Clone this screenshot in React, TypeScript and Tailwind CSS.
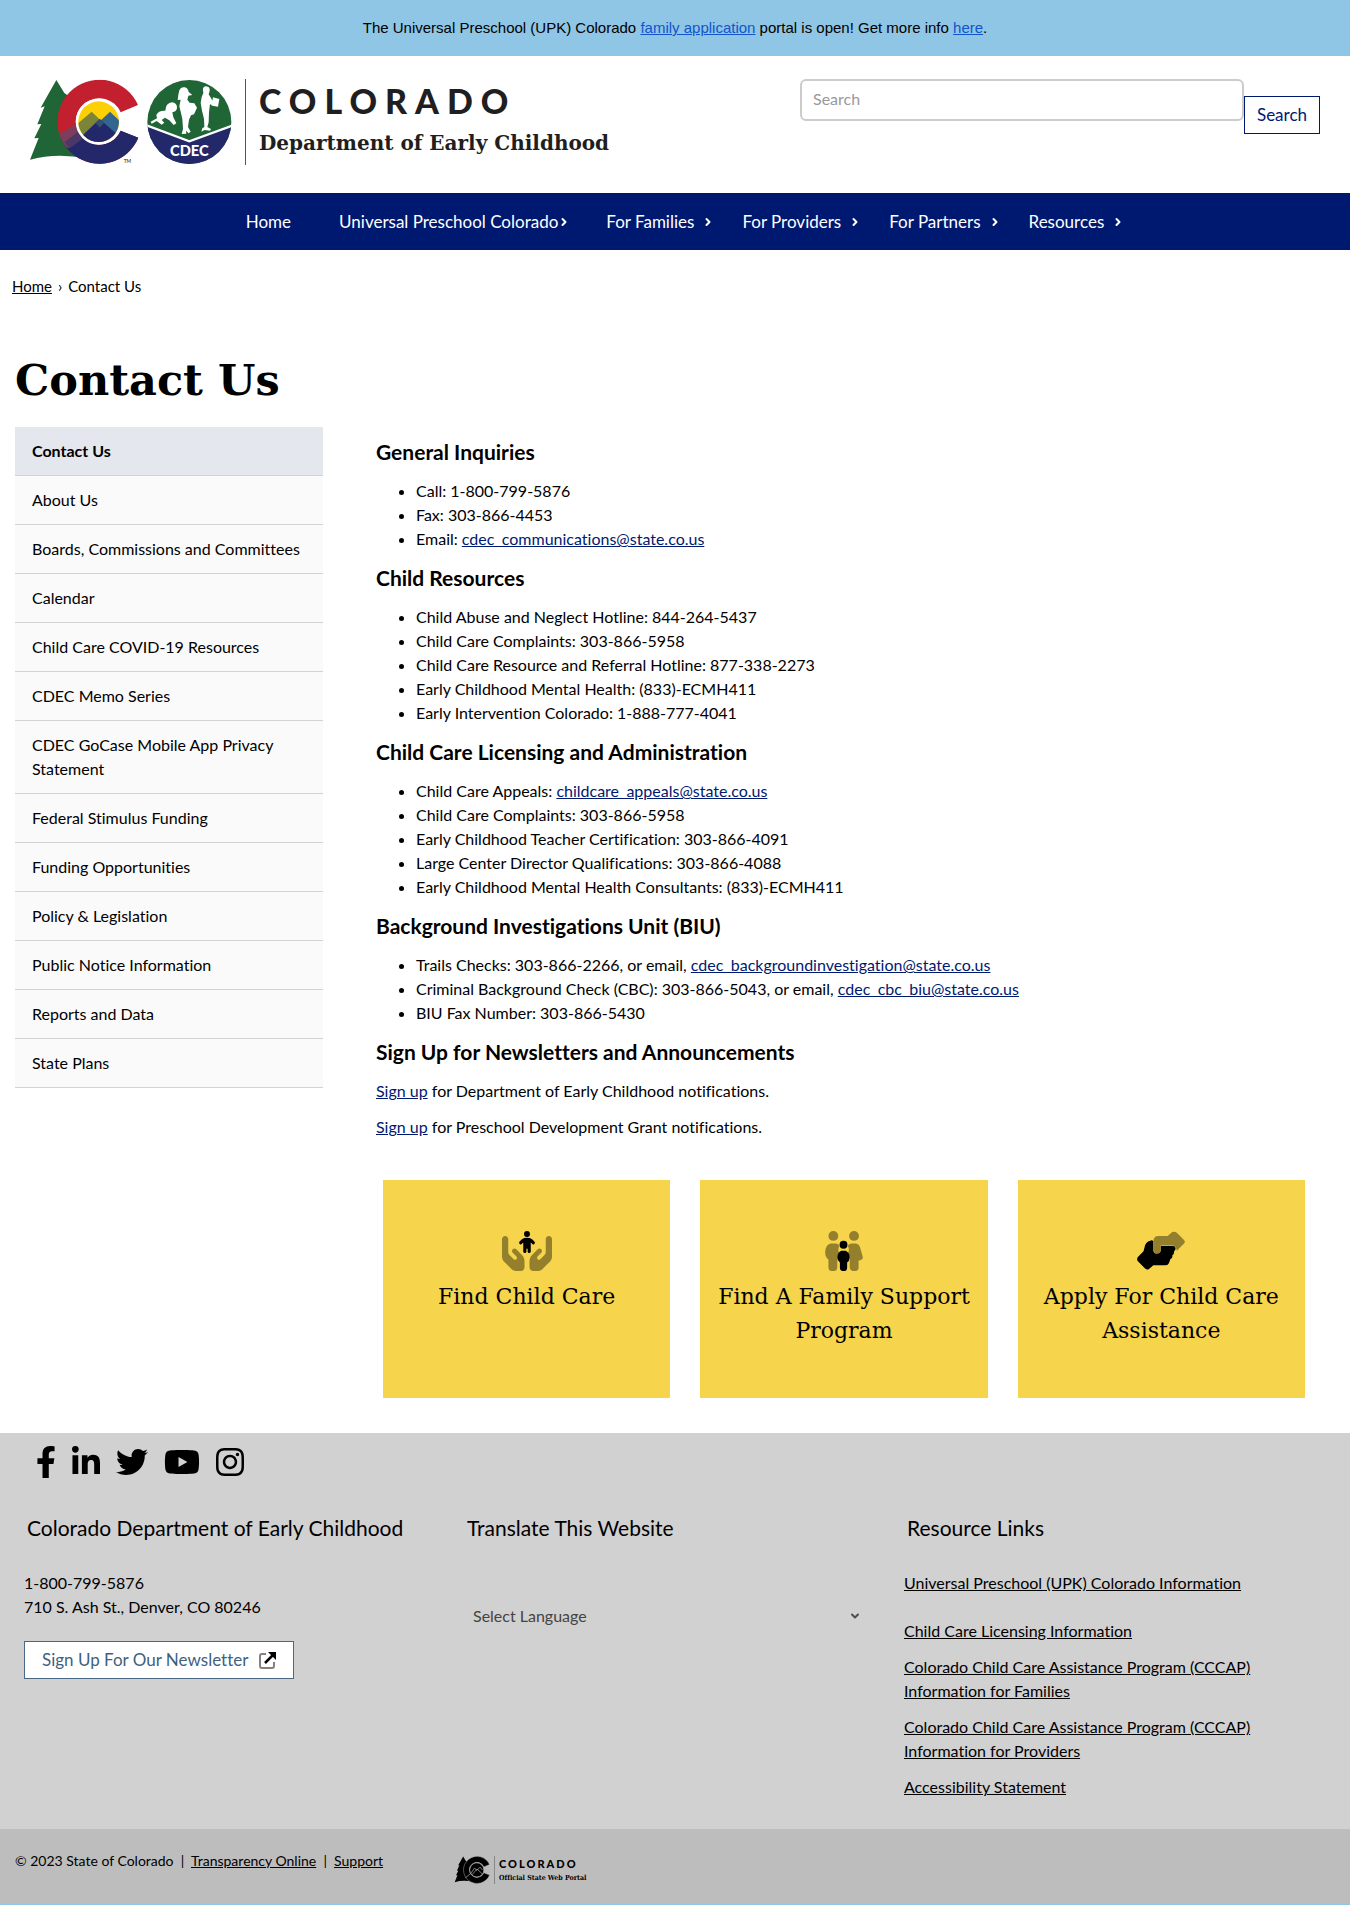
import React from "react";
import { ChevronDown, ChevronRight } from "lucide-react";
import { FaFacebookF, FaInstagram, FaLinkedinIn, FaTwitter, FaYoutube } from "react-icons/fa";
import { FaHandsHolding } from "react-icons/fa6";

const sans = "font-[Lato,sans-serif]";
const slab = "font-['DejaVu_Serif',serif]";
const slabNarrow = "font-['DejaVu_Serif_Condensed','DejaVu_Serif',serif]";

const TREE =
  "M110 33 L134 72 L160 90 L150 240 L200 268 Q110 250 31 272 L57 207 L44 208 L65 165 L53 166 L75 112 L63 116 Z";
const C_SHAPE =
  "M355 108 A126 126 0 1 0 356 206 L303 185 A70 70 0 1 1 303 130 Z";

function Logo() {
  return (
    <svg viewBox="25 30 615 258" className="h-[86px] w-[205px] shrink-0" role="img" aria-label="CDEC logo">
      <defs>
        <clipPath id="c-letter">
          <path d={C_SHAPE} />
        </clipPath>
        <clipPath id="sun">
          <circle cx="237" cy="158" r="61" />
        </clipPath>
        <clipPath id="badge">
          <circle cx="509" cy="159" r="126" />
        </clipPath>
      </defs>
      <path d={TREE} fill="#1f6536" />
      <g clipPath="url(#c-letter)">
        <rect x="100" y="30" width="270" height="260" fill="#c3202f" />
        <path d="M192 160 L112 212 L112 290 L370 290 L370 160 Z" fill="#23286b" />
        <path d="M180 158 L106 204 L144 238 L196 194 Z" fill="#7b3f5c" />
        <path d="M186 180 L134 220 L150 238 L200 202 Z" fill="#4b3868" />
      </g>
      <circle cx="237" cy="158" r="69" fill="#fff" />
      <g clipPath="url(#sun)">
        <rect x="170" y="90" width="140" height="140" fill="#fdd006" />
        <path d="M216 128 L150 184 L190 230 L280 190 Z" fill="#7b8437" />
        <path d="M271 128 L235 162 L290 230 L330 184 Z" fill="#33658e" />
        <path d="M240 150 L165 222 L180 240 L300 240 L312 214 Z" fill="#23286b" />
        <path d="M240 150 L228 162 L240 176 L253 162 Z" fill="#35506d" />
      </g>
      <text x="312" y="282" fontSize="15" fontFamily="Lato" fill="#222">TM</text>
      <g clipPath="url(#badge)">
        <rect x="380" y="30" width="260" height="260" fill="#1f6536" />
        <path d="M380 170 L509 218 L640 170 V290 H380 Z" fill="#23286b" />
        <path d="M380 169 L509 217 L640 169" fill="none" stroke="#fff" strokeWidth="7" />
      </g>
      <g fill="#fff">
        <path d="M393 158 L412 148 L410 138 Q416 124 437 125 Q438 103 456 100 Q473 102 472 117 Q470 128 458 130 L461 145 L470 163 L462 168 L449 154 L436 146 L426 153 L434 161 L426 167 L411 156 L396 164 Z" />
        <path d="M476 77 L479 64 Q484 53 495 55 Q505 57 507 69 L518 78 L506 80 L503 92 L510 101 L524 103 L532 116 L523 136 L514 139 L508 152 L505 174 L513 188 L507 193 L499 185 L500 194 L486 195 L490 180 L488 150 L484 132 L479 112 L483 92 L474 93 Z" />
        <path d="M551 72 Q546 52 559 52 Q572 53 570 66 L567 76 L574 87 L578 95 L580 85 L599 90 L595 113 L578 110 L571 105 L568 130 L567 160 L563 174 L574 180 L571 185 L555 183 L545 188 L548 178 L554 174 L553 150 L547 125 L543 101 L546 84 Z" />
      </g>
      <text x="509" y="260" textAnchor="middle" fontSize="44" fontWeight="900" fontFamily="Lato" fill="#fff">
        CDEC
      </text>
    </svg>
  );
}

function MonoLogo() {
  return (
    <svg viewBox="25 30 335 258" className="h-7 w-9 shrink-0" aria-hidden="true">
      <path d={TREE} />
      <path d={C_SHAPE} stroke="#bdbdbd" strokeWidth="4" />
      <circle cx="237" cy="158" r="66" stroke="#bdbdbd" strokeWidth="6" />
      <path d="M182 190 L216 140 L236 164 L268 132 L290 160 M190 206 L240 150 L290 196 M130 232 L182 190" fill="none" stroke="#bdbdbd" strokeWidth="6" />
    </svg>
  );
}

function HandsChildIcon() {
  return (
    <span className="grid h-10 w-[50px]">
      <FaHandsHolding className="col-start-1 row-start-1 h-10 w-[50px] text-[#94802c]" />
      <svg viewBox="0 0 640 512" className="col-start-1 row-start-1 h-10 w-[50px]" aria-hidden="true">
        <circle cx="320" cy="38" r="38" />
        <path d="M284 90 Q320 82 356 90 Q390 104 420 142 Q426 164 406 172 Q392 174 382 160 L368 148 V264 Q366 282 346 282 Q330 280 328 264 V226 H312 V264 Q310 282 294 282 Q274 280 272 264 V148 L258 160 Q248 174 234 172 Q214 164 220 142 Q250 104 284 90 Z" />
      </svg>
    </span>
  );
}

function FamilyIcon() {
  return (
    <svg viewBox="0 0 115 122" className="h-10 w-[38px]" aria-hidden="true">
      <g fill="#94802c">
        <circle cx="25" cy="15" r="15" />
        <path d="M17 38 H33 Q42 39 43 46 Q37 60 44 68 Q36 76 37 88 V112 Q36 122 26 122 H18 Q10 120 10 112 V87 Q0 80 0 65 Q1 42 17 38 Z" />
        <circle cx="88" cy="15" r="15" />
        <path d="M80 38 H94 Q103 39 106 48 L115 80 Q115 89 102 90 V112 Q101 122 92 122 H84 Q76 120 75 112 V88 Q77 76 69 68 Q76 57 69 46 Q71 39 80 38 Z" />
      </g>
      <circle cx="56" cy="42" r="12" />
      <path d="M49 60 H63 Q75 66 75 81 Q74 92 67 96 V113 Q66 122 60 122 H52 Q45 121 45 113 V96 Q37 91 37 81 Q38 65 49 60 Z" />
    </svg>
  );
}

function HelpingHandsIcon() {
  return (
    <svg viewBox="0 0 147 122" className="h-10 w-12" aria-hidden="true">
      <path d="M2 80 L20 62 L25 43 Q28 36 34 32 L45 28 L50 30 V60 Q52 69 61 69 Q72 68 73 58 V46 H112 Q119 47 118 56 L114 62 Q114 72 108 75 Q110 83 102 86 L98 98 Q95 105 88 105 H50 L36 117 Q30 120 24 114 L2 92 Q-1 86 2 80 Z" />
      <path d="M50 30 Q52 15 65 15 H94 L108 3 Q116 0 122 5 L144 27 Q149 33 144 38 L122 60 Q119 46 110 44 H73 V58 Q72 69 61 69 Q51 68 50 58 Z" fill="#94802c" />
    </svg>
  );
}

const nav = [
  { label: "Home", cls: "mr-5", arrow: false, gap: "gap-2" },
  { label: "Universal Preschool Colorado", cls: "mr-2", arrow: true, gap: "gap-0" },
  { label: "For Families", cls: "", arrow: true, gap: "gap-2" },
  { label: "For Providers", cls: "", arrow: true, gap: "gap-2" },
  { label: "For Partners", cls: "", arrow: true, gap: "gap-2" },
  { label: "Resources", cls: "", arrow: true, gap: "gap-2" },
];

const side = [
  "Contact Us",
  "About Us",
  "Boards, Commissions and Committees",
  "Calendar",
  "Child Care COVID-19 Resources",
  "CDEC Memo Series",
  "CDEC GoCase Mobile App Privacy Statement",
  "Federal Stimulus Funding",
  "Funding Opportunities",
  "Policy & Legislation",
  "Public Notice Information",
  "Reports and Data",
  "State Plans",
];

type Line = { text: string; mail?: string };
const sections: { title: string; lines: Line[] }[] = [
  {
    title: "General Inquiries",
    lines: [
      { text: "Call: 1-800-799-5876" },
      { text: "Fax: 303-866-4453" },
      { text: "Email: ", mail: "cdec_communications@state.co.us" },
    ],
  },
  {
    title: "Child Resources",
    lines: [
      { text: "Child Abuse and Neglect Hotline: 844-264-5437" },
      { text: "Child Care Complaints: 303-866-5958" },
      { text: "Child Care Resource and Referral Hotline: 877-338-2273" },
      { text: "Early Childhood Mental Health: (833)-ECMH411" },
      { text: "Early Intervention Colorado: 1-888-777-4041" },
    ],
  },
  {
    title: "Child Care Licensing and Administration",
    lines: [
      { text: "Child Care Appeals: ", mail: "childcare_appeals@state.co.us" },
      { text: "Child Care Complaints: 303-866-5958" },
      { text: "Early Childhood Teacher Certification: 303-866-4091" },
      { text: "Large Center Director Qualifications: 303-866-4088" },
      { text: "Early Childhood Mental Health Consultants: (833)-ECMH411" },
    ],
  },
  {
    title: "Background Investigations Unit (BIU)",
    lines: [
      { text: "Trails Checks: 303-866-2266, or email, ", mail: "cdec_backgroundinvestigation@state.co.us" },
      { text: "Criminal Background Check (CBC): 303-866-5043, or email, ", mail: "cdec_cbc_biu@state.co.us" },
      { text: "BIU Fax Number: 303-866-5430" },
    ],
  },
];

const link = "text-[#001970] underline";

const socials = [
  { name: "Facebook", icon: <FaFacebookF className="h-8 w-5" /> },
  { name: "LinkedIn", icon: <FaLinkedinIn className="h-8 w-7" /> },
  { name: "Twitter", icon: <FaTwitter className="h-8 w-8" /> },
  { name: "YouTube", icon: <FaYoutube className="h-8 w-9" /> },
  { name: "Instagram", icon: <FaInstagram className="h-8 w-7" /> },
];

const cards = [
  { title: "Find Child Care", icon: <HandsChildIcon /> },
  { title: "Find A Family Support Program", icon: <FamilyIcon /> },
  { title: "Apply For Child Care Assistance", icon: <HelpingHandsIcon /> },
];

const resources = [
  { t: "Universal Preschool (UPK) Colorado Information", cls: "mb-6" },
  { t: "Child Care Licensing Information", cls: "mb-3" },
  { t: "Colorado Child Care Assistance Program (CCCAP) Information for Families", cls: "mb-3" },
  { t: "Colorado Child Care Assistance Program (CCCAP) Information for Providers", cls: "mb-3" },
  { t: "Accessibility Statement", cls: "" },
];

export default function App() {
  return (
    <div className={`bg-white text-base leading-6 text-black [font-variant-ligatures:none] ${sans}`}>
      <div className="bg-[#8fc5e5] px-4 py-4 text-center font-['Liberation_Sans',Arial,sans-serif] text-[15px] leading-6">
        The Universal Preschool (UPK) Colorado{" "}
        <a href="#apply" className="text-[#1155cc] underline">family application</a> portal is open! Get more info{" "}
        <a href="#info" className="text-[#1155cc] underline">here</a>.
      </div>

      <header className="flex items-start justify-between pt-[23px] pr-[30px] pb-7 pl-7">
        <a href="#home" className="flex items-center text-[#1f1f21]">
          <Logo />
          <span className="ml-3 flex h-[86px] flex-col border-l border-[#555] pl-[13px]">
            <span className="mt-1 text-[34px] leading-9 font-black tracking-[8px]">COLORADO</span>
            <span className={`mt-1 text-xl leading-10 font-bold ${slab}`}>Department of Early Childhood</span>
          </span>
        </a>
        <form className="flex items-start" onSubmit={(e) => e.preventDefault()}>
          <input
            type="search"
            aria-label="Search"
            placeholder="Search"
            className="h-[42px] w-[444px] rounded-md border-2 border-[#ccc] px-[11px] pb-1 placeholder:text-[#999]"
          />
          <button type="submit" className="mt-[17px] h-[38px] w-[76px] border border-[#001970] bg-white text-[17px] text-[#001970]">
            Search
          </button>
        </form>
      </header>

      <nav className="flex justify-center gap-7 bg-[#001970] pt-[17px] pb-4 pl-5 text-[17px] leading-6 text-white">
        {nav.map((n) => (
          <a key={n.label} href="#nav" className={`flex items-center ${n.gap} ${n.cls}`}>
            {n.label}
            {n.arrow && <ChevronRight className="h-3 w-3" strokeWidth={4} />}
          </a>
        ))}
      </nav>

      <nav aria-label="Breadcrumb" className="flex gap-[6px] px-3 pt-6 text-[15px]">
        <a href="#home" className="underline">Home</a>
        <span>›</span>
        <span>Contact Us</span>
      </nav>

      <main className="px-[15px]">
        <h1 className={`pt-[52px] pb-[17px] text-[43px] leading-[60px] font-bold ${slab}`}>Contact Us</h1>
        <div className="flex items-start gap-[53px]">
          <ul className="w-[308px] shrink-0">
            {side.map((s, i) => (
              <li key={s} className="border-b border-[#d2d2d6]">
                <a href="#page" className={`block px-[17px] py-3 ${i === 0 ? "bg-[#e4e7ee] font-bold" : "bg-[#fafafa]"}`}>
                  {s}
                </a>
              </li>
            ))}
          </ul>
          <div className="grow pt-[13px]">
            {sections.map((s) => (
              <section key={s.title} className="mb-[15px]">
                <h2 className="mb-[15px] text-[21px] leading-6 font-bold">{s.title}</h2>
                <ul className="list-disc pl-10">
                  {s.lines.map((l) => (
                    <li key={l.text}>
                      {l.text}
                      {l.mail && <a href="#mail" className={link}>{l.mail}</a>}
                    </li>
                  ))}
                </ul>
              </section>
            ))}
            <h2 className="mb-[15px] text-[21px] leading-6 font-bold">Sign Up for Newsletters and Announcements</h2>
            <p className="mb-3"><a href="#signup" className={link}>Sign up</a> for Department of Early Childhood notifications.</p>
            <p><a href="#signup" className={link}>Sign up</a> for Preschool Development Grant notifications.</p>
            <div className="mt-[41px] mr-[30px] mb-[35px] ml-[7px] grid grid-cols-3 gap-[30px]">
              {cards.map((c) => (
                <a key={c.title} href="#card" className="flex h-[218px] flex-col items-center bg-[#f6d44b] px-3 pt-[51px] text-center">
                  {c.icon}
                  <span className={`mt-[9px] text-[22px] leading-[34px] ${slab}`}>{c.title}</span>
                </a>
              ))}
            </div>
          </div>
        </div>
      </main>

      <footer>
        <div className="bg-[#d1d1d1] px-6 pb-[30px]">
          <div className="flex gap-4 pt-[13px] pl-3">
            {socials.map((s) => (
              <a key={s.name} href="#social" aria-label={s.name}>{s.icon}</a>
            ))}
          </div>
          <div className="grid grid-cols-3 pt-[34px]">
            <div>
              <h2 className="mb-[27px] pl-[3px] text-[21px] leading-8">Colorado Department of Early Childhood</h2>
              <p>1-800-799-5876</p>
              <p>710 S. Ash St., Denver, CO 80246</p>
              <a href="#newsletter" className="mt-[22px] inline-flex h-[38px] items-center gap-[11px] border border-[#4a6785] bg-white px-[17px] text-[17px] text-[#3f5f80]">
                Sign Up For Our Newsletter
                <svg viewBox="0 0 17 17" className="h-[17px] w-[17px]" fill="none" aria-hidden="true">
                  <path d="M7 2 H3 Q1 2 1 4 V14 Q1 16 3 16 H13 Q15 16 15 14 V10" stroke="#8a7f80" strokeWidth="2" />
                  <path d="M6 11 L15 2" stroke="#000" strokeWidth="2.5" />
                  <path d="M9 0 H17 V8 Z" fill="#000" />
                </svg>
              </a>
            </div>
            <div className="pl-[9px]">
              <h2 className="mb-14 text-[21px] leading-8">Translate This Website</h2>
              <div className="grid w-[400px] max-w-full items-center">
                <select aria-label="Select Language" className="col-start-1 row-start-1 h-8 w-full appearance-none bg-transparent px-[6px] text-[#444]">
                  <option>Select Language</option>
                </select>
                <ChevronDown className="pointer-events-none col-start-1 row-start-1 mr-[6px] h-3 w-3 justify-self-end text-[#4b4b5a]" strokeWidth={4} />
              </div>
            </div>
            <div className="pl-3">
              <h2 className="mb-[27px] pl-[3px] text-[21px] leading-8">Resource Links</h2>
              <ul className="max-w-[370px]">
                {resources.map((r) => (
                  <li key={r.t} className={r.cls}><a href="#res" className="underline">{r.t}</a></li>
                ))}
              </ul>
            </div>
          </div>
        </div>
        <div className="flex h-[76px] items-start border-b border-[#8fc5e5] bg-[#bdbdbd] px-[15px]">
          <p className="mt-5 w-[439px] text-sm leading-6">
            © 2023 State of Colorado &nbsp;|&nbsp; <a href="#toc" className="underline">Transparency Online</a> &nbsp;|&nbsp;{" "}
            <a href="#support" className="underline">Support</a>
          </p>
          <a href="#portal" className="mt-[27px] flex items-center">
            <MonoLogo />
            <span className="ml-1 flex h-7 flex-col border-l border-[#888] pl-1">
              <span className="text-[11px] leading-4 font-black tracking-[2px]">COLORADO</span>
              <span className={`text-[7px] leading-3 font-bold ${slabNarrow}`}>Official State Web Portal</span>
            </span>
          </a>
        </div>
      </footer>
    </div>
  );
}
